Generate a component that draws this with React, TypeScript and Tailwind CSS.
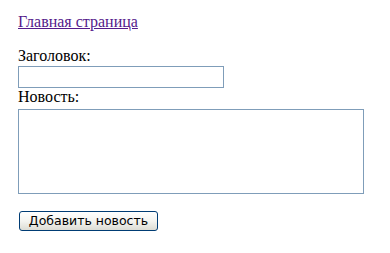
export default function App() {
  return (
    <div className="min-h-[253px] w-[390px] bg-white pl-[18px] pt-[13px] text-[16px] text-black" style={{ fontFamily: '"Liberation Serif", "Times New Roman", serif' }}>
      <div className="leading-[18px]">
        <a href="#" className="text-[#551a8b] underline">Главная страница</a>
      </div>
      <div className="mt-[16px] leading-[18px]">Заголовок:</div>
      <input type="text" className="mt-[1px] block h-[22px] w-[206px] border border-[#7f9db9] bg-white outline-none" />
      <div className="leading-[18px]">Новость:</div>
      <textarea className="mt-[3px] block h-[85px] w-[346px] resize-none border border-[#7f9db9] bg-white outline-none" />
      <button
        type="button"
        className="ml-[1px] mt-[17px] flex h-[20px] w-[139px] items-center justify-center rounded-[3px] border border-[#003c74] bg-gradient-to-b from-white via-[#f4f4f0] to-[#dcdcd4] text-[12.5px] leading-none text-black"
        style={{ fontFamily: '"DejaVu Sans", Tahoma, sans-serif' }}
      >
        Добавить новость
      </button>
    </div>
  );
}
